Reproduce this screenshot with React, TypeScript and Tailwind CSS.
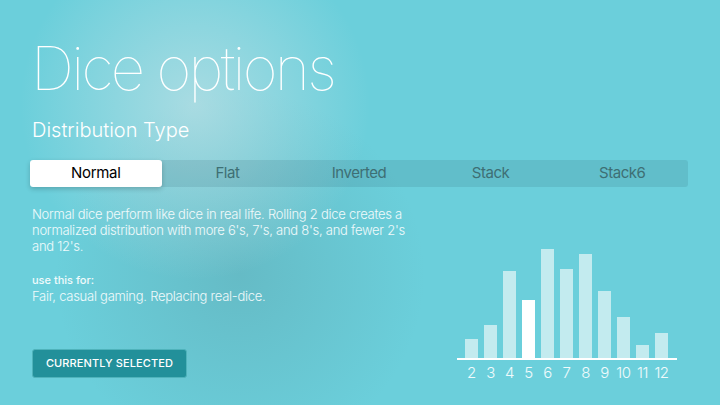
const tabs = ["Normal", "Flat", "Inverted", "Stack", "Stack6"];

const bars = [
  { n: 2, h: 19 },
  { n: 3, h: 33 },
  { n: 4, h: 87 },
  { n: 5, h: 58 },
  { n: 6, h: 109 },
  { n: 7, h: 89 },
  { n: 8, h: 104 },
  { n: 9, h: 67 },
  { n: 10, h: 41 },
  { n: 11, h: 13 },
  { n: 12, h: 25 },
];

function Chart({ selected }: { selected: number }) {
  return (
    <div className="flex flex-col -mb-[4px]">
      <div className="flex items-end gap-[6px] pl-[8px] pr-[9px] border-b-2 border-white">
        {bars.map((b) => (
          <div
            key={b.n}
            className={b.n === selected ? "w-[13px] bg-white" : "w-[13px] bg-[#c3ebef]"}
            style={{ height: b.h }}
          />
        ))}
      </div>
      <div className="flex gap-[6px] pl-[8px] pr-[9px] mt-[4px]">
        {bars.map((b) => (
          <div
            key={b.n}
            className="w-[13px] flex justify-center whitespace-nowrap text-[15px] font-light leading-[18px] text-white/90 tracking-[-0.03em]"
          >
            {b.n}
          </div>
        ))}
      </div>
    </div>
  );
}

export default function App() {
  const active = "Normal";

  return (
    <div
      className="w-[720px] h-[405px] overflow-hidden bg-[#6bcfdb] bg-[radial-gradient(circle_at_195px_105px,rgba(210,228,231,0.6)_0px,rgba(210,228,231,0)_175px),radial-gradient(circle_at_240px_275px,rgba(90,150,158,0.35)_0px,rgba(90,150,158,0)_185px)] text-white pl-[32px] pr-[32px] pt-[38px]"
      style={{ fontFamily: "Inter, 'Noto Sans', sans-serif" }}
    >
      <h1 className="-ml-[1px] text-[60px] leading-none font-thin tracking-[-0.045em]">Dice options</h1>

      <h2 className="mt-[20px] text-[20px] leading-[24px] font-light">Distribution Type</h2>

      <div className="mt-[18px] -ml-[2px] flex h-[27px] rounded-[3px] bg-[rgba(30,80,90,0.13)]">
        {tabs.map((t) =>
          t === active ? (
            <div
              key={t}
              className="flex-1 flex items-center justify-center rounded-[3px] bg-white text-black text-[15px] tracking-[-0.02em] shadow-[0_2px_5px_rgba(0,0,0,0.2)]"
            >
              {t}
            </div>
          ) : (
            <div
              key={t}
              className="flex-1 flex items-center justify-center text-[15px] tracking-[-0.03em] text-[#3e6f74]"
            >
              {t}
            </div>
          )
        )}
      </div>

      <div className="flex justify-between items-end mt-[19px] pr-[11px]">
        <div className="flex flex-col">
          <p className="w-[378px] text-[13px] leading-[16px] font-light text-white/90 tracking-[-0.02em]">
            Normal dice perform like dice in real life. Rolling 2 dice creates a normalized
            distribution with more 6's, 7's, and 8's, and fewer 2's and 12's.
          </p>
          <p className="mt-[19px] text-[11px] leading-[14px] font-medium text-white/90">use this for:</p>
          <p className="mt-[1px] text-[13px] leading-[17px] font-light text-white/90 tracking-[-0.02em]">
            Fair, casual gaming. Replacing real-dice.
          </p>
          <button className="mt-[44px] w-[155px] h-[29px] rounded-[3px] bg-[#22909a] border border-[#4fb3bb] text-white text-[11px] font-medium tracking-[0.01em]">
            CURRENTLY SELECTED
          </button>
        </div>
        <Chart selected={5} />
      </div>
    </div>
  );
}
